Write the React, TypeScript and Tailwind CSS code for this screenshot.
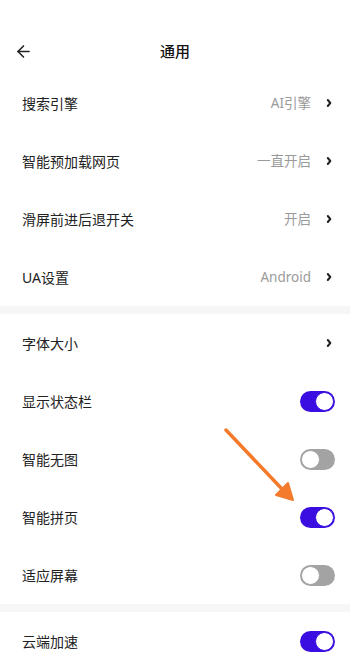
import { ArrowLeft } from 'lucide-react'

type Row =
  | { label: string; kind: 'link'; value?: string }
  | { label: string; kind: 'toggle'; on: boolean }

const group1: Row[] = [
  { label: '搜索引擎', kind: 'link', value: 'AI引擎' },
  { label: '智能预加载网页', kind: 'link', value: '一直开启' },
  { label: '滑屏前进后退开关', kind: 'link', value: '开启' },
  { label: 'UA设置', kind: 'link', value: 'Android' },
]

const group2: Row[] = [
  { label: '字体大小', kind: 'link' },
  { label: '显示状态栏', kind: 'toggle', on: true },
  { label: '智能无图', kind: 'toggle', on: false },
  { label: '智能拼页', kind: 'toggle', on: true },
  { label: '适应屏幕', kind: 'toggle', on: false },
]

const group3: Row[] = [{ label: '云端加速', kind: 'toggle', on: true }]

function Chevron() {
  return (
    <svg width="8" height="10" viewBox="0 0 8 10" className="ml-[14px] mr-[2px]">
      <path d="M2.8 2 L5.3 5 L2.8 8" fill="none" stroke="#222" strokeWidth="2" strokeLinecap="round" strokeLinejoin="round" />
    </svg>
  )
}

function Toggle({ on }: { on: boolean }) {
  return on ? (
    <span className="flex h-[21px] w-[35px] items-center justify-end rounded-full bg-[#3a0ee0] p-[1px]">
      <span className="size-[19px] rounded-full border-[1.5px] border-[#3a0ee0] bg-white" />
    </span>
  ) : (
    <span className="flex h-[21px] w-[35px] items-center justify-start rounded-full bg-[#a3a3a3] p-[1px]">
      <span className="size-[19px] rounded-full border-[1.5px] border-[#a3a3a3] bg-white" />
    </span>
  )
}

function SettingRow({ row }: { row: Row }) {
  return (
    <div className="flex h-[58px] items-center pl-[22px] pr-[15px]">
      <span className="flex-1 text-[14px] text-[#222]">{row.label}</span>
      {row.kind === 'link' ? (
        <>
          {row.value && <span className="text-[13.5px] text-[#9a9a9a]">{row.value}</span>}
          <Chevron />
        </>
      ) : (
        <Toggle on={row.on} />
      )}
    </div>
  )
}

export default function App() {
  return (
    <div className="relative h-[660px] w-[350px] overflow-hidden bg-white font-['Noto_Sans','Noto_Sans_CJK_SC',sans-serif]">
      <header className="relative flex h-[74px] items-center justify-center pt-[28px]">
        <ArrowLeft className="absolute left-[14px] top-[42px] size-[19px] text-[#222]" strokeWidth={2} />
        <h1 className="text-[15px] font-medium text-[#111]">通用</h1>
      </header>

      {group1.map((r) => (
        <SettingRow key={r.label} row={r} />
      ))}
      <div className="h-[8px] bg-[#f6f6f6]" />
      {group2.map((r) => (
        <SettingRow key={r.label} row={r} />
      ))}
      <div className="h-[8px] bg-[#f6f6f6]" />
      {group3.map((r) => (
        <SettingRow key={r.label} row={r} />
      ))}

      {/* annotation arrow pointing at 智能拼页 */}
      <svg className="pointer-events-none absolute left-0 top-0" width="350" height="660">
        <line x1="226" y1="430" x2="282" y2="489" stroke="#f47a2c" strokeWidth="3.5" strokeLinecap="round" />
        <polygon points="293,500 276,495 288,483" fill="#f47a2c" stroke="#f47a2c" strokeWidth="2" strokeLinejoin="round" />
      </svg>
    </div>
  )
}
